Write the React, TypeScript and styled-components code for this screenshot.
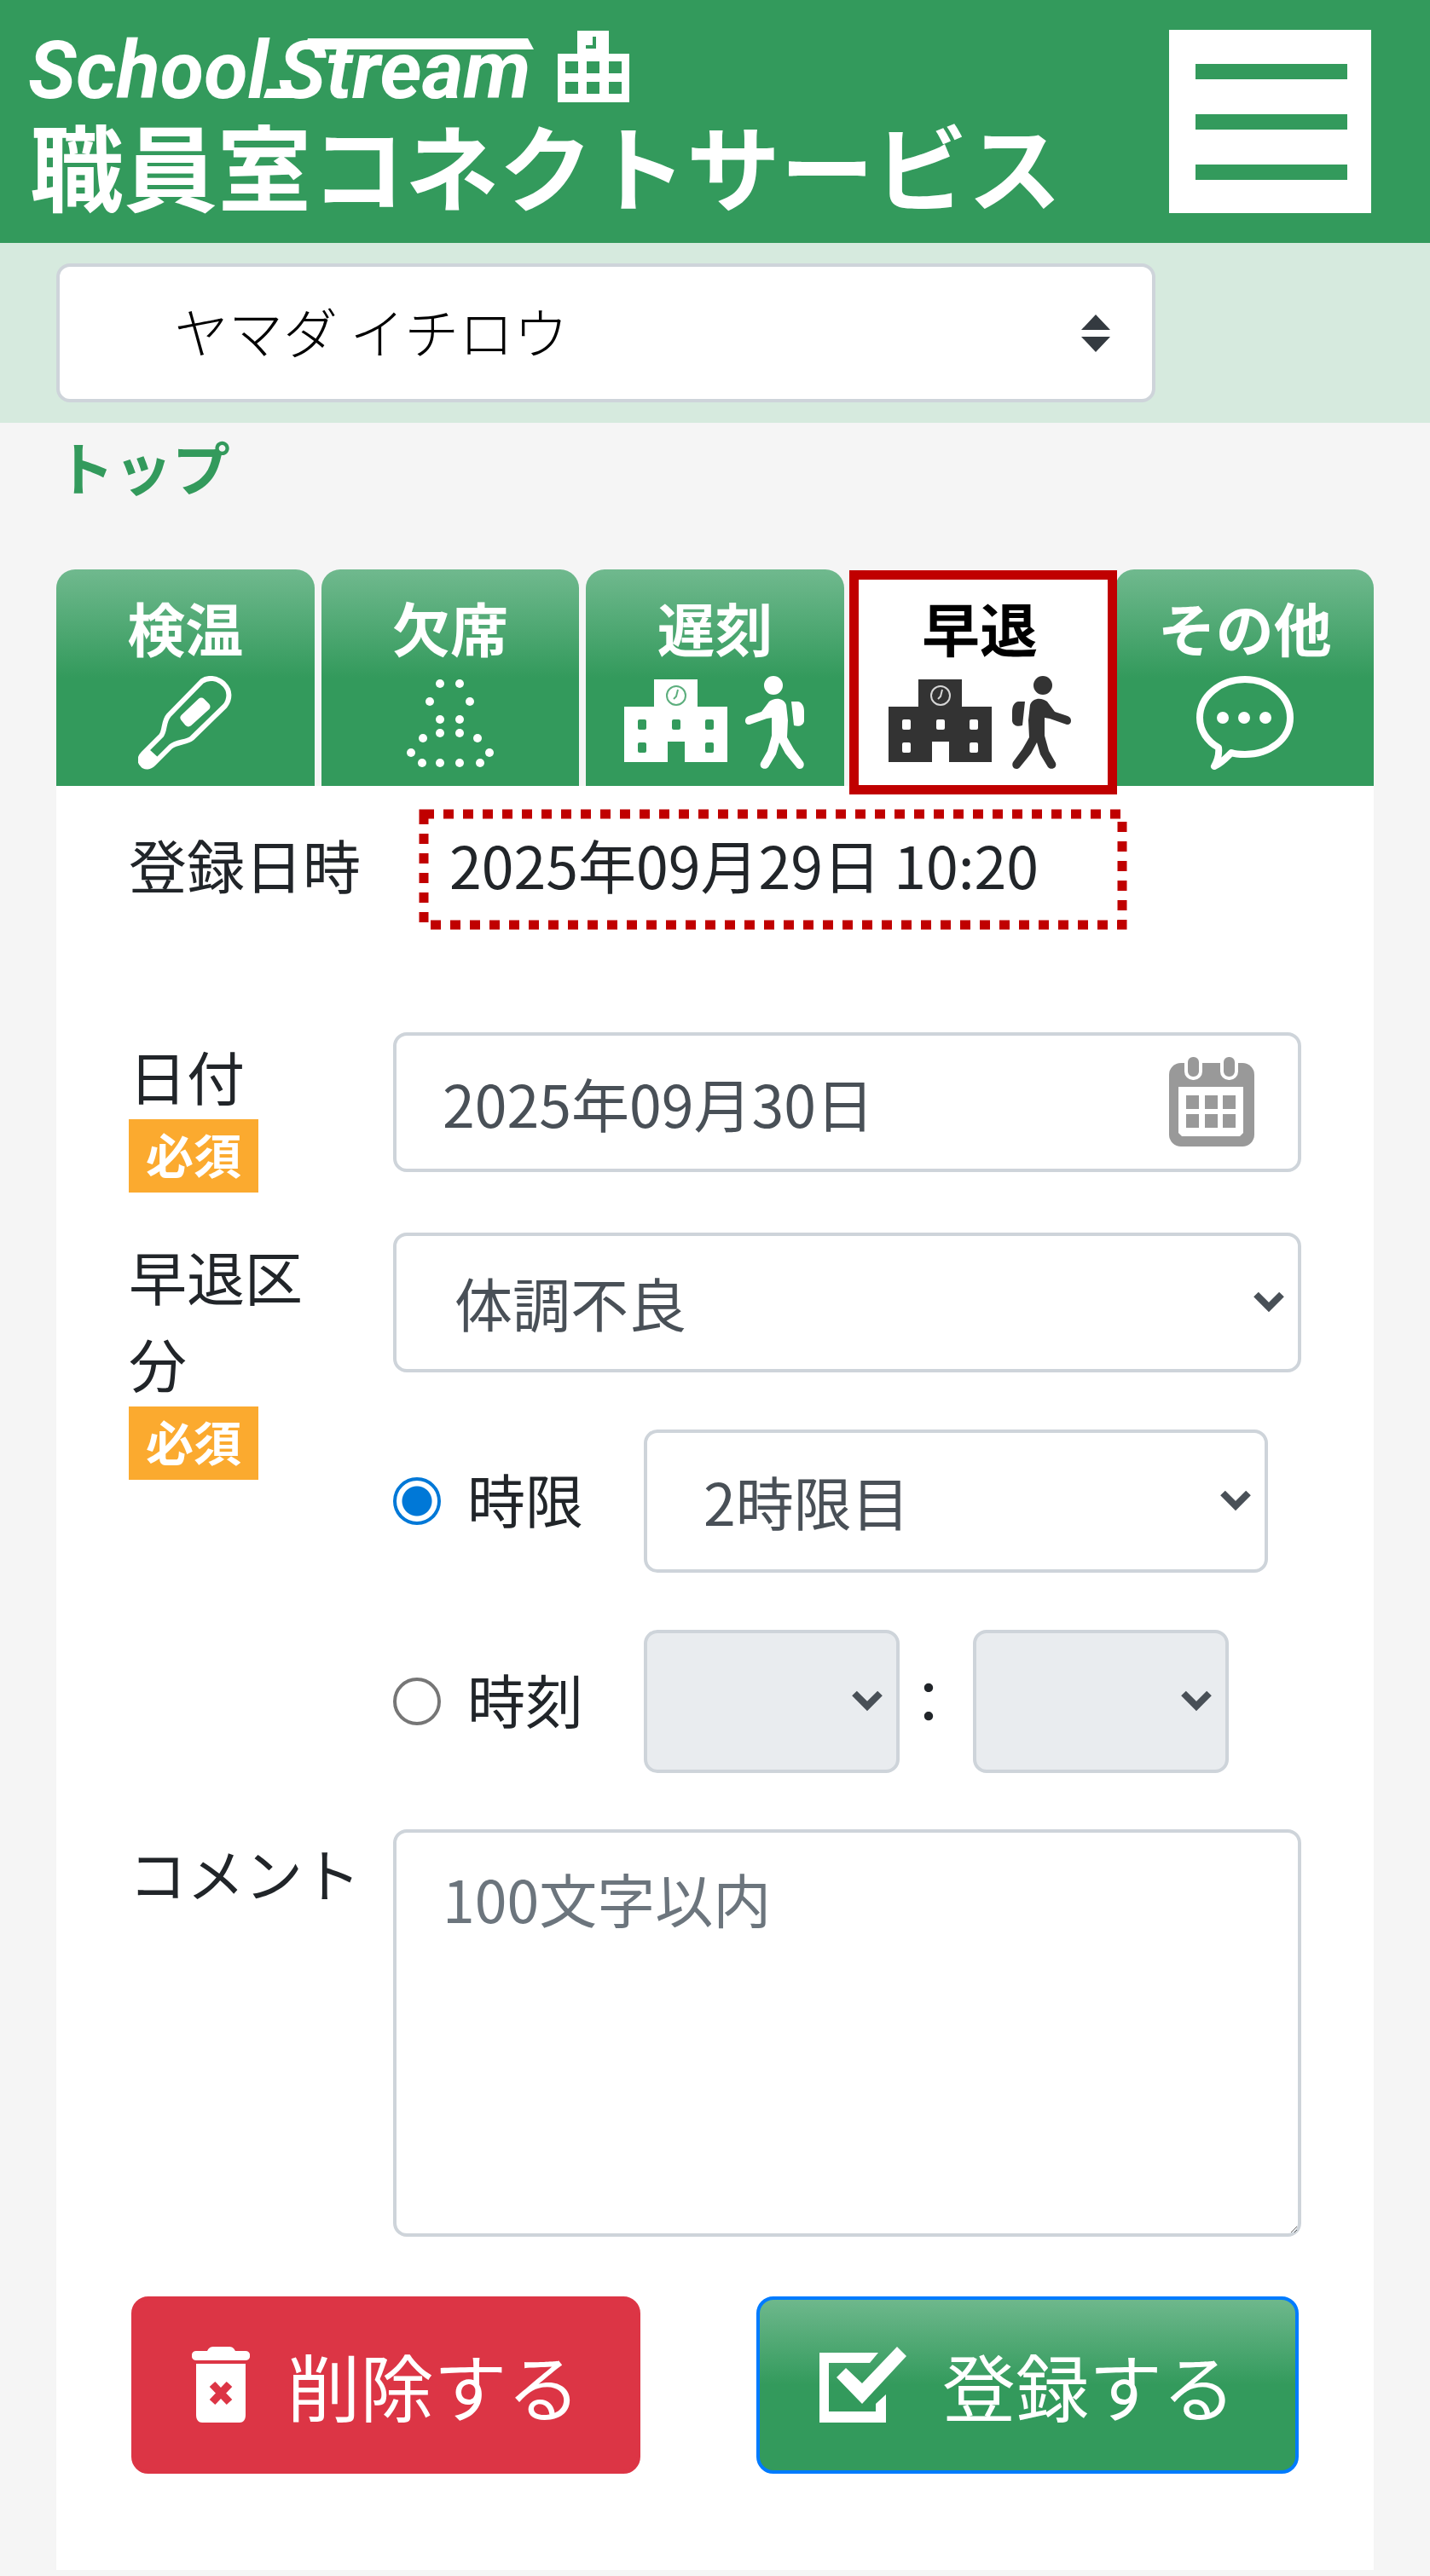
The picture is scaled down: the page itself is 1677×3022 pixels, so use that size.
import React, { useState } from 'react';
import styled, { createGlobalStyle, css } from 'styled-components';

const green = '#339a5c';
const greenFade = `linear-gradient(to bottom, #70b98e 0%, ${green} 50%)`;
const line = '#ced4da';
const red = '#c00000';

const GlobalStyle = createGlobalStyle`
  *, *::before, *::after { box-sizing: border-box; }
  body {
    margin: 0;
    background: #f5f5f5;
    color: #212529;
    font-family: "Noto Sans CJK JP", "Noto Sans", sans-serif;
    font-size: 68px;
    line-height: 102px;
  }
  button, input, select, textarea { font: inherit; color: inherit; margin: 0; }
`;

/* ---------- header ---------- */

const Header = styled.header`
  display: flex;
  justify-content: space-between;
  align-items: flex-start;
  padding: 35px 69px 25px 35px;
  background: ${green};
`;

const Brand = styled.a`
  display: flex;
  flex-direction: column;
  color: #fff;
  text-decoration: none;
`;

const BrandMark = styled.svg`
  display: block;
  width: 704px;
  height: 86px;
  overflow: visible;
`;

const BrandText = styled.text`
  font: italic 700 94px Roboto, sans-serif;
  fill: #fff;
`;

const BrandName = styled.span`
  margin-top: 24px;
  font-family: Roboto, "Noto Sans CJK JP", sans-serif;
  font-size: 110px;
  font-weight: 700;
  line-height: 115px;
  white-space: nowrap;
`;

const MenuButton = styled.button`
  display: flex;
  flex-direction: column;
  justify-content: center;
  gap: 41px;
  width: 237px;
  height: 215px;
  padding: 0 28px 0 31px;
  border: 0;
  background: #fff;
`;

const MenuBar = styled.span`
  height: 18px;
  background: ${green};
`;

const ChildBar = styled.div`
  padding: 24px 66px;
  background: #d6eade;
`;

/* ---------- form controls ---------- */

const SelectBox = styled.div<{ $max?: number }>`
  position: relative;
  flex: 1;
  width: 100%;
  max-width: ${(p) => (p.$max ? `${p.$max}px` : 'none')};
`;

const field = css`
  display: block;
  width: 100%;
  border: 4px solid ${line};
  border-radius: 16px;
  background: #fff;
  color: #495057;
  outline: none;
`;

const Select = styled.select<{ $inset: number; $height: number }>`
  ${field}
  appearance: none;
  height: ${(p) => p.$height}px;
  padding: 0 80px 0 ${(p) => p.$inset}px;
  opacity: 1;
  &:disabled { background: #e9ecef; }
`;

const ChildSelect = styled(Select)`
  padding-bottom: 8px;
  color: #000;
  font-size: 64px;
  font-weight: 300;
`;

const Arrow = styled.svg<{ $right: number }>`
  position: absolute;
  top: 50%;
  right: ${(p) => p.$right}px;
  transform: translateY(-50%);
  pointer-events: none;
`;

const TextInput = styled.input`
  ${field}
  height: 164px;
  padding: 0 160px 0 54px;
`;

const InputBox = styled.div`
  position: relative;
`;

const TextArea = styled.textarea`
  ${field}
  height: 478px;
  padding: 26px 54px;
  resize: both;
  &::placeholder { color: #6c757d; opacity: 1; }
`;

const Radio = styled.input`
  appearance: none;
  flex: none;
  width: 56px;
  height: 56px;
  border: 4px solid #767676;
  border-radius: 50%;
  background: #fff;
  &:checked {
    border-color: #0078d7;
    background: radial-gradient(circle, #0078d7 17px, #fff 18px);
  }
`;

/* ---------- page ---------- */

const Main = styled.main`
  padding: 0 66px 9px;
`;

const Crumb = styled.a`
  display: block;
  width: max-content;
  padding-bottom: 70px;
  color: ${green};
  font-weight: 700;
  text-decoration: none;
`;

const Tabs = styled.nav`
  display: grid;
  grid-template-columns: repeat(5, 1fr);
  gap: 8px;
`;

const Tab = styled.a<{ $active?: boolean }>`
  position: relative;
  display: flex;
  flex-direction: column;
  align-items: center;
  gap: 21px;
  height: 254px;
  padding-top: 32px;
  border-radius: 22px 22px 0 0;
  background: ${(p) => (p.$active ? '#fff' : greenFade)};
  color: ${(p) => (p.$active ? '#000' : '#fff')};
  font-weight: 700;
  line-height: 72px;
  text-decoration: none;
  white-space: nowrap;
  ${(p) =>
    p.$active &&
    css`
      &::after {
        content: '';
        position: absolute;
        z-index: 1;
        inset: 1px -10px -10px -2px;
        border: 11px solid ${red};
      }
    `}
`;

const Panel = styled.form`
  padding: 41px 85px 113px;
  background: #fff;
`;

const Row = styled.div<{ $gap: number }>`
  display: grid;
  grid-template-columns: 310px 1fr;
  align-items: start;
  margin-bottom: ${(p) => p.$gap}px;
`;

const Label = styled.label`
  display: block;
  white-space: nowrap;
`;

const Required = styled.span`
  display: block;
  width: 152px;
  padding-bottom: 6px;
  background: #fbaa2f;
  color: #fff;
  font-size: 56px;
  font-weight: 700;
  line-height: 80px;
  text-align: center;
`;

const Stamp = styled.output`
  position: relative;
  display: block;
  max-width: 831px;
  margin-left: 30px;
  padding-left: 36px;
  white-space: nowrap;
`;

const StampFrame = styled.svg`
  position: absolute;
  left: 0;
  top: -14px;
  width: 100%;
  height: 142px;
  rect {
    width: calc(100% - 12px);
    height: 130px;
    fill: none;
    stroke: ${red};
    stroke-width: 11px;
    stroke-dasharray: 12 11;
  }
`;

const Stack = styled.div`
  display: flex;
  flex-direction: column;
  gap: 67px;
`;

const Choice = styled.div`
  display: grid;
  grid-template-columns: 294px 1fr;
  align-items: center;
`;

const ChoiceLabel = styled.label`
  display: flex;
  align-items: center;
  gap: 31px;
`;

const ChoiceText = styled.span`
  padding-bottom: 6px;
`;

const TimePair = styled.div`
  display: flex;
  align-items: center;
  max-width: 686px;
`;

const Colon = styled.span`
  width: 86px;
  padding-bottom: 6px;
`;

const Actions = styled.div`
  display: flex;
  justify-content: space-between;
  padding: 0 3px;
`;

const Action = styled.button<{ $kind: 'delete' | 'save' }>`
  display: flex;
  align-items: center;
  justify-content: center;
  gap: ${(p) => (p.$kind === 'delete' ? 44 : 42)}px;
  width: ${(p) => (p.$kind === 'delete' ? 597 : 636)}px;
  height: 208px;
  padding: 0;
  border: 4px solid ${(p) => (p.$kind === 'delete' ? '#dc3545' : '#007bff')};
  border-radius: 20px;
  background: ${(p) => (p.$kind === 'delete' ? '#dc3545' : greenFade)};
  background-origin: border-box;
  color: #fff;
  font-size: 86px;
  line-height: 102px;
`;

/* ---------- drawings ---------- */

const Calendar = styled.svg`
  position: absolute;
  top: 28px;
  right: 55px;
`;

const Chevron = ({ right = 20 }: { right?: number }) => (
  <Arrow $right={right} width="36" height="25" viewBox="0 0 36 25" aria-hidden="true">
    <path d="M3 3L18 18L33 3" fill="none" stroke="#495057" strokeWidth="8" />
  </Arrow>
);

const Thermometer = () => (
  <svg width="110" height="110" viewBox="0 0 110 110" aria-hidden="true">
    <path
      d="M75 6C82 1 94 2 101 10C108 17 108 27 102 35L63 73C57 78 45 77 38 83L18 103C14 107 8 108 5 104C1 100 2 95 6 91L27 70C32 64 29 54 36 46Z"
      fill="none"
      stroke="#fff"
      strokeWidth="6"
      strokeLinejoin="round"
    />
    <path d="M13 86L25 97L17 105C13 109 7 109 4 106C0 102 0 96 4 92Z" fill="#fff" />
    <path d="M74 30L80 36L59 55L54 49Z" fill="#fff" stroke="#fff" strokeWidth="9" strokeLinejoin="round" />
  </svg>
);

const ghostDots = [
  [40, 9], [63, 9], [28, 30], [75, 30], [40, 51], [63, 51], [40, 67], [63, 67],
  [20, 73], [84, 73], [6, 90], [98, 90], [19, 102], [40, 102], [63, 102], [87, 102],
];

const DottedPerson = () => (
  <svg width="104" height="110" viewBox="0 0 104 110" aria-hidden="true">
    {ghostDots.map(([x, y]) => (
      <circle key={`${x}-${y}`} cx={x} cy={y} r="5" fill="#fff" />
    ))}
  </svg>
);

const SchoolWalk = ({ ink, hole, leaving }: { ink: string; hole: string; leaving?: boolean }) => (
  <svg
    width={leaving ? 218 : 212}
    height="110"
    viewBox={leaving ? '-2 0 218 110' : '0 0 212 110'}
    overflow="visible"
    aria-hidden="true"
  >
    <path d="M0 36H35V4H86V36H121V101H71V77H51V101H0Z" fill={ink} />
    <g fill={hole}>
      <rect x="16" y="51" width="10" height="12" rx="2" />
      <rect x="56" y="51" width="10" height="12" rx="2" />
      <rect x="95" y="51" width="10" height="12" rx="2" />
      <rect x="16" y="78" width="10" height="12" rx="2" />
      <rect x="95" y="78" width="10" height="12" rx="2" />
    </g>
    <circle cx="61" cy="23" r="11" fill="none" stroke={hole} strokeWidth="2" opacity="0.8" />
    <path d="M63 16L61 24L58 27" fill="none" stroke={hole} strokeWidth="2" opacity="0.8" />
    <g transform={leaving ? 'translate(356 0) scale(-1 1)' : undefined}>
      <circle cx="175" cy="11" r="11" fill={ink} />
      <path
        d="M170 30C176 25 187 25 190 34L192 52L191 72L199 86L210 101C213 107 206 112 202 107L189 91L182 78L178 92L169 107C165 111 158 108 160 102L168 88L173 70L173 49L167 50L147 57C141 58 140 49 146 47L161 42Z"
        fill={ink}
      />
      <path d="M196 30L204 30C209 31 211 36 211 42V53C210 58 205 60 199 58Z" fill={ink} />
    </g>
  </svg>
);

const Bubble = () => (
  <svg width="114" height="110" viewBox="0 0 114 110" aria-hidden="true">
    <path
      d="M57 4C28 4 4 24 4 49C4 64 13 77 26 84C27 92 25 99 21 106C30 102 35 96 41 90C46 92 51 92 57 92C86 92 110 74 110 49C110 24 86 4 57 4Z"
      fill="none"
      stroke="#fff"
      strokeWidth="8"
      strokeLinejoin="round"
    />
    <circle cx="31" cy="49" r="7" fill="#fff" />
    <circle cx="56" cy="49" r="7" fill="#fff" />
    <circle cx="81" cy="49" r="7" fill="#fff" />
  </svg>
);

const TrashIcon = () => (
  <svg width="68" height="90" viewBox="0 0 68 90" aria-hidden="true">
    <path d="M18 5C20 1 22 0 26 0H43C47 0 49 1 51 5H63C70 5 70 16 63 16H5C-2 16 -2 5 5 5Z" fill="#fff" />
    <path d="M5 20H63V80C63 86 60 89 56 89H12C8 89 5 86 5 80Z" fill="#fff" />
    <path d="M24 44L44 65M44 44L24 65" stroke="#dc3545" strokeWidth="9" />
  </svg>
);

const CheckIcon = () => (
  <svg width="102" height="90" viewBox="0 0 102 90" aria-hidden="true">
    <path d="M0 7H69L59 19H11V76H66V67L78 56V89H0Z" fill="#fff" />
    <path d="M31 25L50 43L91 0L102 11L50 67L20 36Z" fill="#fff" />
  </svg>
);

const CalendarIcon = () => (
  <Calendar width="100" height="106" viewBox="0 0 100 106" aria-hidden="true">
    <rect x="0" y="8" width="100" height="98" rx="14" fill="#999" />
    <path d="M11 36H87V90L83 94H15L11 90Z" fill="#fff" />
    {[28, 70].map((x) => (
      <rect key={x} x={x - 8} y="-1" width="17" height="27" rx="8" fill="#999" stroke="#fff" strokeWidth="4" />
    ))}
    {[20, 42, 63].map((x) =>
      [46, 68].map((y) => <rect key={`${x}-${y}`} x={x} y={y} width="15" height="16" fill="#999" />),
    )}
  </Calendar>
);

const Logo = () => (
  <BrandMark viewBox="0 0 704 86" aria-hidden="true">
    <BrandText x="-2" y="80">School</BrandText>
    <BrandText x="291" y="80">Stream</BrandText>
    <path d="M326 10H584L591 23H322Z" fill="#fff" />
    <path d="M278 69H306L314 80H274Z" fill="#fff" />
    <g transform="translate(619 1)">
      <path d="M23 0H60V27H84V84H0V27H23Z" fill="#fff" />
      <path d="M43 7V19H33" fill="none" stroke={green} strokeWidth="4" />
      {[9, 34, 60].map((x) =>
        [36, 60].map((y) => <rect key={`${x}-${y}`} x={x} y={y} width="15" height="14" fill={green} />),
      )}
    </g>
  </BrandMark>
);

export default function App() {
  const [mode, setMode] = useState<'period' | 'clock'>('period');
  const [date, setDate] = useState('2025年09月30日');

  return (
    <>
      <GlobalStyle />
      <Header>
        <Brand href="#top">
          <Logo />
          <BrandName>職員室コネクトサービス</BrandName>
        </Brand>
        <MenuButton type="button" aria-label="メニュー">
          <MenuBar />
          <MenuBar />
          <MenuBar />
        </MenuButton>
      </Header>

      <ChildBar>
        <SelectBox $max={1289}>
          <ChildSelect $inset={134} $height={163} aria-label="園児・児童">
            <option>ヤマダ イチロウ</option>
          </ChildSelect>
          <Arrow $right={53} width="34" height="44" viewBox="0 0 34 44" aria-hidden="true">
            <path d="M17 0L34 18H0ZM17 44L0 26H34Z" fill="#343a40" />
          </Arrow>
        </SelectBox>
      </ChildBar>

      <Main>
        <Crumb href="#top">トップ</Crumb>

        <Tabs>
          <Tab href="#temperature">検温<Thermometer /></Tab>
          <Tab href="#absence">欠席<DottedPerson /></Tab>
          <Tab href="#late">遅刻<SchoolWalk ink="#fff" hole={green} /></Tab>
          <Tab href="#early" $active aria-current="page">早退<SchoolWalk ink="#333" hole="#fff" leaving /></Tab>
          <Tab href="#other">その他<Bubble /></Tab>
        </Tabs>

        <Panel onSubmit={(e) => e.preventDefault()}>
          <Row $gap={146}>
            <Label htmlFor="stamp">登録日時</Label>
            <Stamp id="stamp">
              2025年09月29日 10:20
              <StampFrame aria-hidden="true"><rect x="6" y="6" /></StampFrame>
            </Stamp>
          </Row>

          <Row $gap={47}>
            <Label htmlFor="date">日付<Required>必須</Required></Label>
            <InputBox>
              <TextInput id="date" value={date} onChange={(e) => setDate(e.target.value)} />
              <CalendarIcon />
            </InputBox>
          </Row>

          <Row $gap={66}>
            <Label htmlFor="reason">早退区<br />分<Required>必須</Required></Label>
            <Stack>
              <SelectBox>
                <Select id="reason" $inset={68} $height={164}>
                  <option>体調不良</option>
                </Select>
                <Chevron />
              </SelectBox>
              <Choice>
                <ChoiceLabel>
                  <Radio type="radio" name="mode" checked={mode === 'period'} onChange={() => setMode('period')} />
                  <ChoiceText>時限</ChoiceText>
                </ChoiceLabel>
                <SelectBox $max={732}>
                  <Select $inset={66} $height={168} disabled={mode !== 'period'} aria-label="時限">
                    <option>2時限目</option>
                  </Select>
                  <Chevron />
                </SelectBox>
              </Choice>
              <Choice>
                <ChoiceLabel>
                  <Radio type="radio" name="mode" checked={mode === 'clock'} onChange={() => setMode('clock')} />
                  <ChoiceText>時刻</ChoiceText>
                </ChoiceLabel>
                <TimePair>
                  <SelectBox>
                    <Select $inset={66} $height={168} disabled={mode !== 'clock'} aria-label="時" />
                    <Chevron />
                  </SelectBox>
                  <Colon>：</Colon>
                  <SelectBox>
                    <Select $inset={66} $height={168} disabled={mode !== 'clock'} aria-label="分" />
                    <Chevron />
                  </SelectBox>
                </TimePair>
              </Choice>
            </Stack>
          </Row>

          <Row $gap={70}>
            <Label htmlFor="comment">コメント</Label>
            <TextArea id="comment" placeholder="100文字以内" />
          </Row>

          <Actions>
            <Action type="button" $kind="delete"><TrashIcon />削除する</Action>
            <Action type="submit" $kind="save"><CheckIcon />登録する</Action>
          </Actions>
        </Panel>
      </Main>
    </>
  );
}
